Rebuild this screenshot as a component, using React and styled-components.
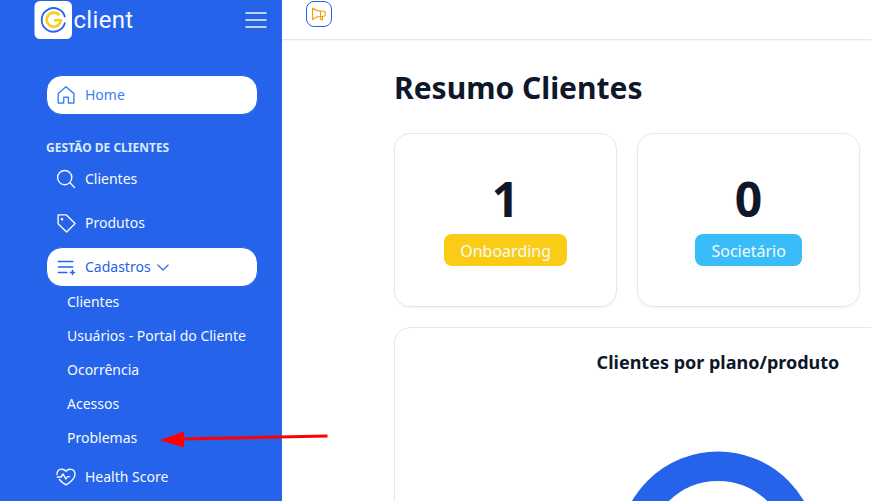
import React from 'react';
import styled, { createGlobalStyle, css } from 'styled-components';

const Global = createGlobalStyle`
  * { box-sizing: border-box; }
  html, body { margin: 0; height: 100%; overflow: hidden; background: #fff; }
  body { font-family: "Noto Sans", sans-serif; color: #0f172a; }
`;

const Page = styled.div`
  position: relative;
  display: flex;
  height: 501px;
  overflow: hidden;
`;

const Sidebar = styled.aside`
  flex: 0 0 282px;
  height: 501px;
  background: #2563eb;
  color: #f8fafc;
`;

const Brand = styled.header`
  display: flex;
  align-items: center;
  height: 40px;
  margin-bottom: 35px;
  padding: 0 15px 0 34px;
`;

const BrandName = styled.span`
  flex: 1;
  margin-left: 1.5px;
  font: 400 24px/38px Roboto, sans-serif;
  letter-spacing: 0.3px;
`;

const Nav = styled.nav`
  display: flex;
  flex-direction: column;
  padding: 0 24px 0 46px;
`;

const Item = styled.a`
  display: flex;
  align-items: center;
  gap: 9px;
  height: 40px;
  margin-bottom: ${(p) => p.$after ?? 4}px;
  padding: 0 9px;
  border: 1px solid #2563eb;
  border-radius: 16px;
  font-size: 14px;
  line-height: 20px;
  ${(p) => p.$active && css`
    background: #fff;
    color: ${p.$active};
  `}
`;

const Section = styled.h2`
  margin: 23px 0 1px;
  font-size: 12px;
  line-height: 20px;
  font-weight: 700;
  color: #dbeafe;
`;

const SubItem = styled.a`
  height: 34px;
  padding-left: 21px;
  font-size: 14px;
  line-height: 34px;
  white-space: nowrap;
`;

const SubList = styled.div`
  display: flex;
  flex-direction: column;
  margin-bottom: 2px;
`;

const Icon = styled.svg`
  flex: none;
  fill: none;
  stroke: currentColor;
  stroke-width: ${(p) => p.$weight ?? 1.3};
  stroke-linecap: round;
  stroke-linejoin: round;
`;

const Chevron = styled(Icon)`
  margin-left: -3px;
`;

const Main = styled.main`
  flex: 1;
  min-width: 0;
  overflow: hidden;
`;

const Topbar = styled.div`
  height: 40px;
  padding: 1px 0 0 24px;
  border-bottom: 1px solid #e2e8f0;
  box-shadow: 0 1px 2px rgba(0, 0, 0, 0.05);
`;

const NewsButton = styled.button`
  display: flex;
  align-items: center;
  justify-content: center;
  width: 26px;
  height: 26px;
  padding: 0;
  border: 1px solid #2563eb;
  border-radius: 8px;
  background: #fff;
  color: #f59e0b;
`;

const Content = styled.div`
  width: 760px;
  padding: 28px 0 0 112px;
`;

const Title = styled.h1`
  margin: 0 0 25px;
  font-size: 30px;
  line-height: 40px;
  font-weight: 700;
`;

const Cards = styled.div`
  display: grid;
  grid-template-columns: 223px 223px;
  gap: 20px;
  margin-bottom: 20px;
`;

const Card = styled.section`
  display: flex;
  flex-direction: column;
  align-items: center;
  border: 1px solid #e2e8f0;
  border-radius: 16px;
  box-shadow: 0 1px 2px rgba(0, 0, 0, 0.05);
`;

const StatCard = styled(Card)`
  height: 174px;
  padding-top: 40px;
`;

const Count = styled.strong`
  font-size: 48px;
  line-height: 48px;
  height: 60px;
  padding-top: 1px;
`;

const Tag = styled.span`
  height: 32px;
  padding: 0 15.7px 0 16px;
  border-radius: 8px;
  background: ${(p) => p.$color};
  color: #f8fafc;
  font-size: 16px;
  line-height: 34px;
`;

const ChartCard = styled(Card)`
  height: 400px;
  padding-top: 20px;
`;

const ChartTitle = styled.h3`
  margin: 0 0 75px;
  font-size: 18px;
  line-height: 28px;
  font-weight: 700;
`;

const Arrow = styled.svg`
  position: absolute;
  left: 158px;
  top: 428px;
`;

const Logo = () => (
  <svg width="38" height="40" viewBox="34 0 38 40" fill="none">
    <rect x="34.5" y="1" width="37.5" height="38" rx="5.5" fill="#fff" />
    <path d="M65 17.300a11.800 11.800 0 1 0 0 5.200" stroke="#2563eb" strokeWidth="1.8" />
    <path d="M59.200 15.300a7 7 0 1 0 1.500 5h-6.700" stroke="#facc15" strokeWidth="2.600" />
  </svg>
);

const glyphs = {
  house: <path d="M10 1.700 2.200 8.600V18h5.500v-5.700h4.700V18h5.500V8.600Z" />,
  search: <><circle cx="8.7" cy="8.6" r="7.1" /><path d="m13.900 13.800 4.600 4.600" /></>,
  tag: <><path d="M2.100 1.900h8.300l8.700 8.700-8.500 8.500-8.500-8.400Z" /><circle cx="6" cy="6.2" r=".6" fill="currentColor" /></>,
  list: <path d="M2.400 4.500h14.400M2.400 10h14.400M2.400 15.500h8.400M16.500 13.500v4M14.500 15.500h4" />,
  heart: <path d="M1 7.500C.8 1.700 7.300.8 10 4.400c2.600-3.600 9-2.700 9 2.800 0 4.300-5.400 8.500-9 10.700-2.300-1.400-4.800-3.200-6.600-5.400M1.300 10h3.800l2-3 2.700 4.900 1.900-2.300h1.800" />,
};

const Glyph = ({ name }) => (
  <Icon width="20" height="20" viewBox="0 0 20 20" $weight={name === 'list' ? 1.6 : 1.4}>
    {glyphs[name]}
  </Icon>
);

const registers = ['Clientes', 'Usuários - Portal do Cliente', 'Ocorrência', 'Acessos', 'Problemas'];

export default function App() {
  return (
    <Page>
      <Global />
      <Sidebar>
        <Brand>
          <Logo />
          <BrandName>client</BrandName>
          <Icon width="22" height="20" viewBox="0 0 22 20" $weight={1.7}>
            <path d="M1.200 3h19.600M1.200 10h19.600M1.200 17h19.600" />
          </Icon>
        </Brand>
        <Nav>
          <Item $active="#3b82f6" $after={0}><Glyph name="house" />Home</Item>
          <Section>GESTÃO DE CLIENTES</Section>
          <Item><Glyph name="search" />Clientes</Item>
          <Item><Glyph name="tag" />Produtos</Item>
          <Item $active="#2563eb" $after={-2}>
            <Glyph name="list" />Cadastros
            <Chevron width="12" height="12" viewBox="0 0 12 12" $weight={1.1}>
              <path d="m.8 4 5.200 5 5.200-5" />
            </Chevron>
          </Item>
          <SubList>
            {registers.map((label) => <SubItem key={label}>{label}</SubItem>)}
          </SubList>
          <Item><Glyph name="heart" />Health Score</Item>
        </Nav>
      </Sidebar>
      <Main>
        <Topbar>
          <NewsButton>
            <Icon width="16" height="16" viewBox="0 0 16 16" $weight={1.1}>
              <path d="M1.500 2v11.500c2.300-2.100 4.800-3 8-3V5C6.300 5 3.800 4.100 1.500 2ZM9.500 5h2.200a2.700 2.700 0 0 1 0 5.500H9.500v3l2 .4V10.500" />
            </Icon>
          </NewsButton>
        </Topbar>
        <Content>
          <Title>Resumo Clientes</Title>
          <Cards>
            <StatCard><Count>1</Count><Tag $color="#facc15">Onboarding</Tag></StatCard>
            <StatCard><Count>0</Count><Tag $color="#38bdf8">Societário</Tag></StatCard>
          </Cards>
          <ChartCard>
            <ChartTitle>Clientes por plano/produto</ChartTitle>
            <svg width="200" height="200" viewBox="0 0 200 200">
              <circle cx="100" cy="100" r="84.800" fill="none" stroke="#2563eb" strokeWidth="29.400" />
            </svg>
          </ChartCard>
        </Content>
      </Main>
      <Arrow width="174" height="24" viewBox="158 428 174 24">
        <path d="M182 439.100 327.500 436" stroke="#f00" strokeWidth="3" />
        <path d="M160 440 184 431.500V447.500Z" fill="#f00" />
      </Arrow>
    </Page>
  );
}
